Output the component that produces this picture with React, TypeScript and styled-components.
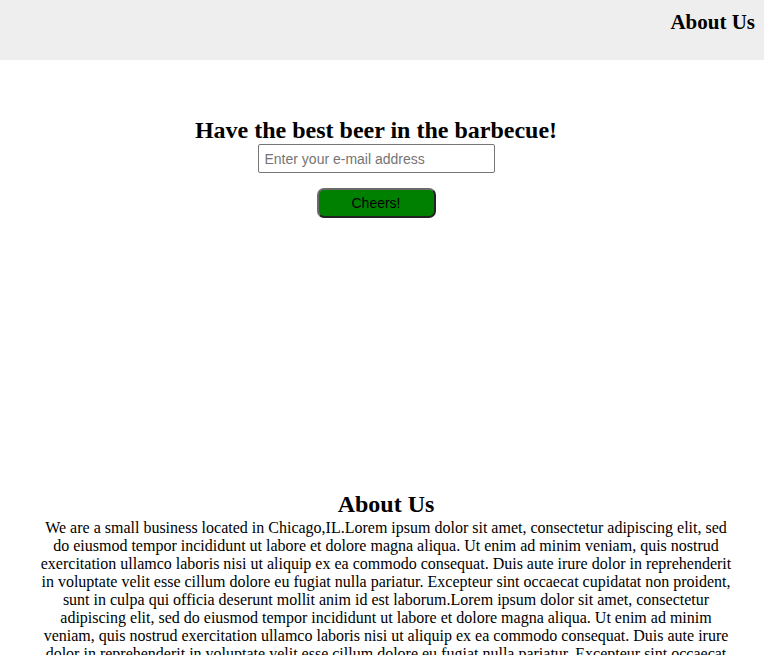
import React from "react";
import styled, { createGlobalStyle } from "styled-components";

const Global = createGlobalStyle`
  html, body { margin: 0; padding: 0; background: #fff; }
  body { font-family: "Liberation Serif", "Times New Roman", serif; color: #000; }
`;

const Header = styled.header`
  height: 60px;
  background: #eeeeee;
  display: flex;
  justify-content: flex-end;
  align-items: flex-start;
`;

const NavLink = styled.h3`
  margin: 10px 9px 0 0;
  font-size: 21px;
  font-weight: bold;
  line-height: 24px;
`;

const Hero = styled.section`
  display: flex;
  flex-direction: column;
  align-items: center;
  padding: 56px 12px 0 0;
`;

const Title = styled.h2`
  margin: 0;
  font-size: 24px;
  line-height: 28px;
  font-weight: bold;
  text-align: center;
`;

const EmailInput = styled.input`
  box-sizing: border-box;
  width: 237px;
  height: 29px;
  padding: 1px 6px;
  border: 1px solid #767676;
  border-radius: 2px;
  font-family: "Liberation Sans", Arial, sans-serif;
  font-size: 14px;
  &::placeholder { color: #757575; }
`;

const CheersButton = styled.button`
  box-sizing: border-box;
  margin-top: 15px;
  width: 119px;
  height: 30px;
  background: #008000;
  border: 2px solid #222;
  border-top-color: #6b6b6b;
  border-left-color: #6b6b6b;
  border-radius: 7px;
  font-family: "Liberation Sans", Arial, sans-serif;
  font-size: 14px;
  color: #000;
`;

const About = styled.section`
  margin: 272px 32px 0 40px;
  text-align: center;
`;

const AboutTitle = styled.h2`
  margin: 0;
  font-size: 24px;
  line-height: 28px;
  font-weight: bold;
`;

const AboutText = styled.p`
  margin: 1px 0 0;
  font-size: 16px;
  line-height: 18px;
`;

const lorem =
  "Lorem ipsum dolor sit amet, consectetur adipiscing elit, sed do eiusmod tempor incididunt ut labore et dolore magna aliqua. Ut enim ad minim veniam, quis nostrud exercitation ullamco laboris nisi ut aliquip ex ea commodo consequat. Duis aute irure dolor in reprehenderit in voluptate velit esse cillum dolore eu fugiat nulla pariatur. Excepteur sint occaecat cupidatat non proident, sunt in culpa qui officia deserunt mollit anim id est laborum.";

export default function App() {
  return (
    <>
      <Global />
      <Header>
        <NavLink>About Us</NavLink>
      </Header>
      <Hero>
        <Title>Have the best beer in the barbecue!</Title>
        <EmailInput type="email" placeholder="Enter your e-mail address" />
        <CheersButton>Cheers!</CheersButton>
      </Hero>
      <About>
        <AboutTitle>About Us</AboutTitle>
        <AboutText>
          We are a small business located in Chicago,IL.{lorem}
          {lorem}
          {lorem}
        </AboutText>
      </About>
    </>
  );
}
